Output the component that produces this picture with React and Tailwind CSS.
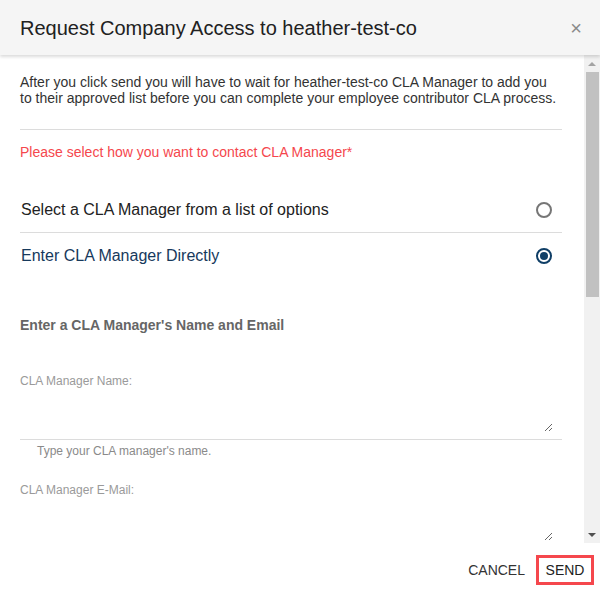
import React from "react";

function Radio({ checked }) {
  return checked ? (
    <span className="flex h-[16px] w-[16px] items-center justify-center rounded-full border-2 border-[#0f3e66]">
      <span className="h-[8px] w-[8px] rounded-full bg-[#0f3e66]" />
    </span>
  ) : (
    <span className="h-[16px] w-[16px] rounded-full border-2 border-[#767676]" />
  );
}

export default function App() {
  return (
    <div
      className="flex h-[597px] w-[600px] flex-col overflow-hidden bg-white"
      style={{ fontFamily: '"Liberation Sans", Arial, sans-serif' }}
    >
      <div className="relative z-10 flex h-[55px] shrink-0 items-center justify-between bg-[#f5f5f5] pl-[20px] pr-[18px] shadow-[0_2px_3px_rgba(0,0,0,0.14)]">
        <h1 className="text-[20px] leading-[24px] text-[#212121]">Request Company Access to heather-test-co</h1>
        <span className="text-[20px] leading-[20px] text-[#8a8a8a]">×</span>
      </div>

      <div className="flex h-[488px] shrink-0">
        <div className="w-[584px] overflow-hidden pl-[20px] pr-[22px] pt-[19px]">
          <p className="text-[14px] leading-[16px] text-[#333]">
            After you click send you will have to wait for heather-test-co CLA Manager to add you
            <br />
            to their approved list before you can complete your employee contributor CLA process.
          </p>
          <div className="mt-[23px] h-px bg-[#dcdcdc]" />
          <p className="mt-[14px] text-[14px] leading-[16px] text-[#f5474d]">
            Please select how you want to contact CLA Manager*
          </p>

          <div className="mt-[28px] flex h-[45px] items-center justify-between border-b border-[#dcdcdc] pl-[1px] pr-[10px]">
            <span className="text-[16px] leading-[20px] text-[#222]">Select a CLA Manager from a list of options</span>
            <Radio checked={false} />
          </div>
          <div className="flex h-[45px] items-center justify-between pl-[1px] pr-[10px]">
            <span className="text-[16px] leading-[20px] text-[#17395c]">Enter CLA Manager Directly</span>
            <Radio checked />
          </div>

          <p className="mt-[39px] text-[14px] font-bold leading-[16px] text-[#666]">
            Enter a CLA Manager's Name and Email
          </p>

          <p className="mt-[41px] text-[12px] leading-[14px] text-[#9a9a9a]">CLA Manager Name:</p>
          <div className="border-b border-[#dcdcdc] pb-[7px]">
            <textarea className="mt-[4px] block h-[40px] w-[533px] resize-y border-0 bg-transparent outline-none" />
          </div>
          <p className="mt-[4px] pl-[17px] text-[12px] leading-[14px] text-[#8a8a8a]">Type your CLA manager's name.</p>

          <p className="mt-[25px] text-[12px] leading-[14px] text-[#9a9a9a]">CLA Manager E-Mail:</p>
          <textarea className="mt-[4px] block h-[40px] w-[533px] resize-y border-0 bg-transparent outline-none" />
        </div>

        <div className="flex w-[16px] flex-col items-center bg-[#f1f1f1]">
          <div className="flex h-[17px] w-full items-center justify-center">
            <span className="h-0 w-0 border-x-[4px] border-b-[4px] border-x-transparent border-b-[#a3a3a3]" />
          </div>
          <div className="h-[225px] w-[13px] bg-[#c1c1c1]" />
          <div className="flex-1" />
          <div className="flex h-[17px] w-full items-center justify-center">
            <span className="h-0 w-0 border-x-[4px] border-t-[4px] border-x-transparent border-t-[#505050]" />
          </div>
        </div>
      </div>

      <div className="flex flex-1 items-center justify-end gap-[11px] pr-[6px]">
        <span className="text-[14px] leading-[16px] text-[#333]">CANCEL</span>
        <span className="flex h-[30px] w-[58px] items-center justify-center border-[3px] border-[#f5474d] text-[14px] leading-[16px] text-[#222]">
          SEND
        </span>
      </div>
    </div>
  );
}
